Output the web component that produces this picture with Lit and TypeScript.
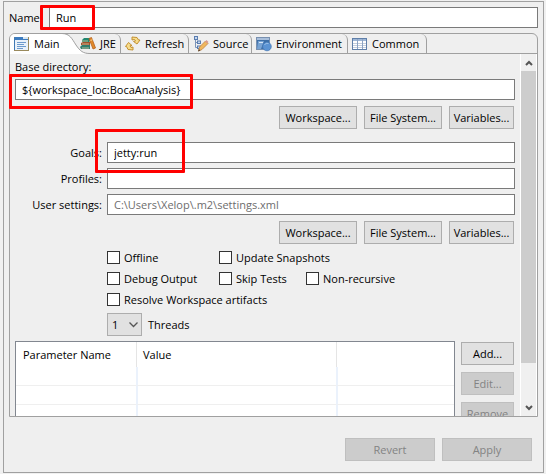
import { LitElement, html, css, svg } from "lit";
import { customElement, state } from "lit/decorators.js";

const icons: Record<string, unknown> = {
  main: svg`
    <rect x="0.5" y="1.5" width="14" height="13" fill="#e9f1fa" stroke="#9a8a5c"/>
    <path d="M0.5 14V1.5H10" fill="none" stroke="#3f78b4"/>
    <rect x="1" y="1" width="13" height="3" fill="#3c7cc0"/>
    <rect x="9" y="1" width="5" height="2" fill="#d8e6f2"/>
    <path d="M3 6.5h9M3 8.5h7M3 10.5h9M3 12.5h6" stroke="#6d9bcd"/>`,
  jre: svg`
    <path d="M2 4l2-2h6v3l-1 1H2z" fill="#23876f"/>
    <path d="M1 7l2-1h7v3H1z" fill="#a0522d"/>
    <path d="M0 11l2-2h8v4H1z" fill="#2f7d6d"/>
    <path d="M2 5h6M2 8h7M2 12h7" stroke="#dcc9a0" stroke-width="0.8"/>
    <path d="M9 2.500l2.500-1 4 10.500-2.500 1z" fill="#e28a2b" stroke="#b5601c" stroke-width="0.8"/>
    <path d="M10.500 4.500l2-.8" stroke="#f8d38e"/>`,
  refresh: svg`
    <path d="M7 1L12 1.500L13.500 4L15 4L12 8L8.500 5.500L10.500 5L9.500 3.500L7 4z" fill="#f7dc8b" stroke="#bd8824" stroke-width="0.9"/>
    <path d="M8 14L3 13.500L1.500 10.500L.5 10.500L3.500 6.500L7 9.500L5 9.800L6 11.500L8 11z" fill="#f7dc8b" stroke="#bd8824" stroke-width="0.9"/>`,
  source: svg`
    <path d="M2.500 3V11.500H5M2.500 6.500H5" fill="none" stroke="#7a93b8"/>
    <rect x="1.500" y="0.500" width="3" height="3" fill="#c5d7ee" stroke="#5a7db0"/>
    <rect x="4.500" y="5" width="3" height="2.500" fill="#c5d7ee" stroke="#5a7db0"/>
    <rect x="4.500" y="10" width="3" height="2.500" fill="#c5d7ee" stroke="#5a7db0"/>
    <path d="M5.500 15l1-4 6-6 2.500 2.500-6 6z" fill="#f0b75e" stroke="#bd8448" stroke-width="0.8"/>
    <path d="M12 5.500l1.500-1.500 2 2-1.500 1.500z" fill="#d99a8e"/>
    <path d="M5 15.500l.8-2.500 1.700 1.600z" fill="#5c4630"/>`,
  environment: svg`
    <rect x="0.500" y="1.500" width="13" height="12" fill="#3d6fa8" stroke="#7890b0"/>
    <rect x="1" y="2" width="12" height="2" fill="#a9bfdb"/>
    <path d="M1 13L2 5H8L5 13z" fill="#79a4d4"/>
    <path d="M3 6.500h4" stroke="#d6e6f6"/>
    <circle cx="11" cy="10.500" r="4.300" fill="#5b93d3" stroke="#4377b4" stroke-width="0.700"/>
    <path d="M8.500 9a3 3 0 0 1 4-1.500" fill="none" stroke="#9cc2ea"/>`,
  common: svg`
    <rect x="0.500" y="2.500" width="14" height="11" fill="#fff" stroke="#5f7fa9"/>
    <rect x="1" y="3" width="13" height="2" fill="#9db6d6"/>
    <path d="M1 7.500h13M1 9.500h13M1 11.500h13" stroke="#c3cedd"/>
    <path d="M5.500 3v10M10.500 3v10" stroke="#8da4c4"/>`,
};

const tabs = [
  { id: "main", label: "Main" },
  { id: "jre", label: "JRE" },
  { id: "refresh", label: "Refresh" },
  { id: "source", label: "Source" },
  { id: "environment", label: "Environment" },
  { id: "common", label: "Common" },
];

@customElement("app-root")
export class AppRoot extends LitElement {
  @state() private selected = "main";

  static styles = css`
    :host {
      display: block;
      box-sizing: border-box;
      height: 100vh;
      padding: 1px 2px 1px 3px;
      background: #f0f0f0;
      color: #000;
      font: 11px/16px "Open Sans", "Noto Sans", sans-serif;
    }
    * { box-sizing: border-box; }
    button, input, select { font: inherit; color: inherit; margin: 0; border-radius: 0; }
    .panel {
      display: flex;
      flex-direction: column;
      height: 100%;
      padding: 5px 5px 11px;
      border: 1px solid #a0a0a0;
      background: #efefef;
    }
    .name { display: grid; grid-template-columns: 36px 1fr; gap: 4px; align-items: center; }
    .name label { white-space: nowrap; }
    .field { position: relative; }
    .text {
      display: block;
      width: 100%;
      height: 21px;
      padding: 0 6px;
      border: 1px solid #7a7a7a;
      background: #fff;
    }
    .text.muted { color: #6d6d6d; }
    .mark { position: absolute; border: 3px solid #f00; border-radius: 1px; pointer-events: none; z-index: 2; }
    .mark-name { left: -9px; top: -2px; width: 55px; height: 25px; }
    .mark-base { left: -6px; top: -5px; width: 184px; height: 35px; }
    .mark-goals { left: -12px; top: -13px; width: 90px; height: 44px; }

    .folder {
      display: flex;
      flex-direction: column;
      flex: 1;
      min-height: 0;
      margin: 5px 0 21px;
      border: 1px solid #a0a0a0;
      border-radius: 6px 6px 0 0;
    }
    .tabs { display: flex; height: 20px; }
    .tab {
      position: relative;
      display: flex;
      align-items: center;
      gap: 4px;
      padding: 0 3px 0 4px;
      border: solid #a0a0a0;
      border-width: 0 1px 1px 0;
      border-top-right-radius: 6px;
      background: none;
      white-space: nowrap;
    }
    .tab.main { width: 66px; border: 0; border-radius: 5px 0 0 0; background: linear-gradient(90deg, #fff 52px, transparent 52px); }
    .tab.jre { width: 45px; }
    .tab.refresh { width: 68px; }
    .tab.source { width: 63px; }
    .tab.environment { width: 96px; }
    .tab.common { width: 79px; }
    .icon { flex: none; width: 16px; height: 16px; }
    .tab span { position: relative; z-index: 2; }
    .tail { position: absolute; left: 52px; top: -1px; z-index: 1; width: 28px; height: 21px; }
    .jre .icon { position: relative; z-index: 2; }
    .rest { flex: 1; border-bottom: 1px solid #a0a0a0; }

    .view { display: flex; flex: 1; min-height: 0; }
    .content { flex: 1; min-width: 0; padding: 5px 5px 0; overflow-x: visible; overflow-y: clip; }
    .base { display: block; margin-bottom: 4px; }
    .actions { display: flex; justify-content: flex-end; gap: 7px; margin-top: 6px; padding-right: 1px; }
    .btn {
      height: 23px;
      flex: none;
      padding: 0;
      border: 1px solid #adadad;
      background: #e1e1e1;
      text-align: center;
      white-space: nowrap;
    }
    .btn:disabled { border-color: #bfbfbf; background: #ccc; color: #838383; }
    .wide { width: 78px; }
    .narrow { width: 65px; }
    .large { width: 90px; }
    .form { display: grid; grid-template-columns: 87px 1fr; gap: 5px; margin-top: 13px; align-items: center; }
    .form label { text-align: right; }
    .options { display: grid; gap: 8px; margin: 7px 0 7px 92px; }
    .line { display: flex; height: 13px; }
    .check { display: flex; align-items: center; gap: 4px; white-space: nowrap; }
    .check.first { width: 112px; }
    .check.second { width: 87px; }
    .check input { appearance: none; flex: none; width: 13px; height: 13px; border: 1px solid #333; background: #fff; }
    .check input:checked { background: #333; box-shadow: inset 0 0 0 2px #fff; }
    .threads { display: flex; align-items: center; gap: 6px; margin-left: 92px; }
    .select { position: relative; width: 35px; height: 23px; }
    .select select { appearance: none; width: 100%; height: 100%; padding: 0 4px; border: 1px solid #adadad; background: #e1e1e1; }
    .chevron { position: absolute; right: 4px; top: 8px; width: 9px; height: 7px; pointer-events: none; }

    .params { display: flex; gap: 6px; margin-top: 5px; padding-right: 1px; }
    .grid { flex: 1; min-width: 0; height: 120px; border: 1px solid #828790; background: #fff; }
    table { width: 100%; table-layout: fixed; border-collapse: separate; border-spacing: 0; }
    .c1 { width: 120px; }
    .c2 { width: 200px; }
    th { height: 25px; padding: 0 0 0 7px; text-align: left; font-weight: 400; }
    th + th { padding-left: 6px; border-left: 1px solid #e5e5e5; }
    td { height: 19px; padding: 0; border-bottom: 1px solid #efefef; }
    td + td { border-left: 2px solid #ebf2fc; }
    .side { display: flex; flex-direction: column; gap: 7px; width: 53px; padding-top: 1px; }

    .scroll { display: flex; flex-direction: column; width: 17px; border: solid #fff; border-width: 0 1px; background: #f0f0f0; }
    .arrow { display: grid; place-items: center; height: 17px; padding: 0; border: 0; background: none; }
    .arrow svg { width: 8px; height: 6px; }
    .track { flex: 1; }
    .thumb { height: 89%; background: #cdcdcd; }
    .footer { display: flex; justify-content: flex-end; gap: 7px; padding-right: 6px; }
  `;

  private tab(t: { id: string; label: string }) {
    return html`<button class="tab ${t.id}" role="tab" aria-selected=${this.selected === t.id}
      @click=${() => (this.selected = t.id)}>
      <svg class="icon" viewBox="0 0 16 16" aria-hidden="true">${icons[t.id]}</svg><span>${t.label}</span>
      ${t.id === "main"
        ? html`<svg class="tail" viewBox="0 0 28 21" aria-hidden="true">
            <path d="M0 1C8 1 10 6 14 12C18 18 21 20.500 28 20.500V21H0z" fill="#fff"/>
            <path d="M0 .5C8 .5 10 6 14 12C18 18 21 20.500 28 20.500" fill="none" stroke="#a0a0a0"/>
          </svg>`
        : ""}
    </button>`;
  }

  private locations() {
    return html`<div class="actions">
      <button class="btn wide">Workspace...</button>
      <button class="btn wide">File System...</button>
      <button class="btn narrow">Variables...</button>
    </div>`;
  }

  private check(label: string, cls = "") {
    return html`<label class="check ${cls}"><input type="checkbox" />${label}</label>`;
  }

  private arrow(label: string, d: string) {
    return html`<button class="arrow" aria-label=${label}>
      <svg viewBox="0 0 8 6"><path d=${d} fill="none" stroke="#555" stroke-width="2"/></svg>
    </button>`;
  }

  render() {
    return html`<main class="panel">
      <div class="name">
        <label for="name">Name:</label>
        <div class="field"><input id="name" class="text" value="Run" /><span class="mark mark-name"></span></div>
      </div>
      <section class="folder">
        <div class="tabs" role="tablist">${tabs.map((t) => this.tab(t))}<span class="rest"></span></div>
        <div class="view">
          <div class="content" role="tabpanel">
            <label class="base" for="base">Base directory:</label>
            <div class="field">
              <input id="base" class="text" value="\${workspace_loc:BocaAnalysis}" /><span class="mark mark-base"></span>
            </div>
            ${this.locations()}
            <div class="form">
              <label for="goals">Goals:</label>
              <div class="field"><input id="goals" class="text" value="jetty:run" /><span class="mark mark-goals"></span></div>
              <label for="profiles">Profiles:</label>
              <input id="profiles" class="text" />
              <label for="settings">User settings:</label>
              <input id="settings" class="text muted" value="C:\\Users\\Xelop\\.m2\\settings.xml" />
            </div>
            ${this.locations()}
            <div class="options">
              <div class="line">${this.check("Offline", "first")}${this.check("Update Snapshots")}</div>
              <div class="line">
                ${this.check("Debug Output", "first")}${this.check("Skip Tests", "second")}${this.check("Non-recursive")}
              </div>
              <div class="line">${this.check("Resolve Workspace artifacts")}</div>
            </div>
            <div class="threads">
              <div class="select">
                <select id="threads"><option>1</option><option>2</option><option>4</option></select>
                <svg class="chevron" viewBox="0 0 9 7"><path d="M.5 1.500L4.500 5.500L8.500 1.500" fill="none" stroke="#555" stroke-width="1.300"/></svg>
              </div>
              <label for="threads">Threads</label>
            </div>
            <div class="params">
              <div class="grid">
                <table>
                  <colgroup><col class="c1" /><col class="c2" /><col /></colgroup>
                  <thead><tr><th>Parameter Name</th><th>Value</th><th></th></tr></thead>
                  <tbody>${[0, 1, 2, 3].map(() => html`<tr><td></td><td></td><td></td></tr>`)}</tbody>
                </table>
              </div>
              <div class="side">
                <button class="btn">Add...</button>
                <button class="btn" disabled>Edit...</button>
                <button class="btn" disabled>Remove</button>
              </div>
            </div>
          </div>
          <div class="scroll">
            ${this.arrow("Scroll up", "M1 5L4 2L7 5")}
            <div class="track"><div class="thumb"></div></div>
            ${this.arrow("Scroll down", "M1 1L4 4L7 1")}
          </div>
        </div>
      </section>
      <div class="footer">
        <button class="btn large" disabled>Revert</button>
        <button class="btn large" disabled>Apply</button>
      </div>
    </main>`;
  }
}
